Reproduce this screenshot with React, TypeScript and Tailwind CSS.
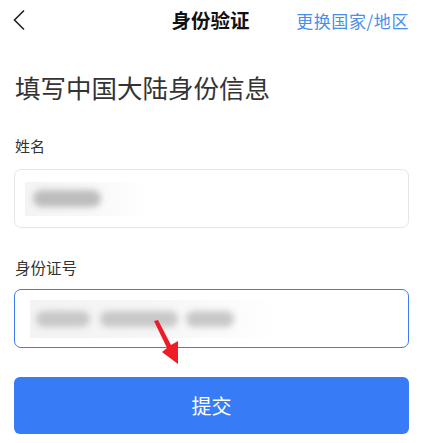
import React from 'react'

const cjk = { fontFamily: '"Noto Sans CJK SC", "Noto Sans", sans-serif' }

function BlurField({ blobs, width }: { blobs: { w: number; ml: number }[]; width: number }) {
  return (
    <div className="h-[34px] bg-gradient-to-r from-[#f4f4f4] via-[#f8f8f8] to-white flex items-center px-2" style={{ width }}>
      {blobs.map((b, i) => (
        <div
          key={i}
          className="h-[17px] rounded-full bg-[#bdbdbd] blur-[3px]"
          style={{ width: b.w, marginLeft: b.ml }}
        />
      ))}
    </div>
  )
}

export default function App() {
  return (
    <div className="relative w-[423px] h-[443px] bg-white overflow-hidden text-[#333]" style={cjk}>
      {/* Header */}
      <div className="grid grid-cols-[1fr_auto_1fr] items-center h-[40px] pl-[12px] pr-[14px]">
        <svg width="14" height="22" viewBox="0 0 14 22" className="text-[#222]">
          <path d="M12 1.5 L2.5 11 L12 20.5" fill="none" stroke="currentColor" strokeWidth="1.6" />
        </svg>
        <div className="text-[19.5px] font-bold text-[#111] leading-none">身份验证</div>
        <div className="justify-self-end text-[17px] tracking-[0.6px] text-[#4a8ee9] leading-none">更换国家/地区</div>
      </div>

      {/* Body */}
      <div className="px-[14px]">
        <h1 className="mt-[32px] pl-[1px] text-[25.5px] leading-[30px] text-[#333]">填写中国大陆身份信息</h1>

        <div className="mt-[34px] pl-[1px] text-[15px] leading-[20px]">姓名</div>
        <div className="mt-[13px] h-[59px] rounded-[7px] border border-[#e6e6e6] flex items-center pl-[10px]">
          <BlurField width={124} blobs={[{ w: 68, ml: 0 }]} />
        </div>

        <div className="mt-[29px] pl-[1px] text-[15.5px] leading-[20px]">身份证号</div>
        <div className="mt-[12px] h-[59px] rounded-[7px] border border-[#3d7cf0] flex items-center pl-[15px]">
          <div className="h-[38px] w-[248px] bg-gradient-to-r from-[#f3f3f3] via-[#f6f6f6] to-white flex items-center px-[6px]">
            <div className="h-[16px] w-[54px] rounded-full bg-[#c8c8c8] blur-[3px]" />
            <div className="h-[16px] w-[78px] ml-[10px] rounded-full bg-[#c8c8c8] blur-[3px]" />
            <div className="h-[16px] w-[48px] ml-[8px] rounded-full bg-[#c8c8c8] blur-[3px]" />
          </div>
        </div>

        <button
          type="button"
          className="mt-[29px] w-full h-[57px] rounded-[6px] bg-[#387bf6] text-white text-[20px] flex items-center justify-center"
          style={cjk}
        >
          提交
        </button>
      </div>

      {/* Red annotation arrow */}
      <svg className="absolute left-0 top-0 pointer-events-none" width="423" height="443">
        <polygon points="154,321 158,320 171,345 178,341 178,364 162,352 167,348" fill="#ee1c25" />
      </svg>
    </div>
  )
}
